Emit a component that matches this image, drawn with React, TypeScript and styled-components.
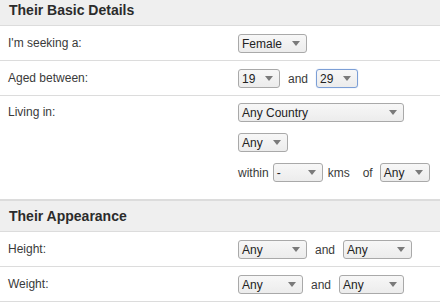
import React from "react";
import styled, { createGlobalStyle } from "styled-components";

const GlobalStyle = createGlobalStyle`
  body {
    margin: 0;
    background: #fff;
    font-family: "Liberation Sans", Arial, sans-serif;
    overflow: hidden;
  }
`;

const Page = styled.div`
  width: 440px;
  margin-top: -6px;
`;

const SectionHeader = styled.h2`
  margin: 0;
  height: 30px;
  line-height: 30px;
  padding: 0 9px;
  font-size: 14px;
  font-weight: bold;
  color: #2b2b2b;
  background: #efefef;
  border-top: 1px solid #dcdcdc;
  border-bottom: 1px solid #dcdcdc;
`;

const Row = styled.div<{ $tall?: boolean }>`
  display: grid;
  grid-template-columns: 238px 1fr;
  align-items: start;
  padding: ${(p) => (p.$tall ? "7px 0 17px" : "8px 0 7px")};
  border-bottom: 1px solid #dcdcdc;
`;

const Label = styled.div`
  padding-left: 8px;
  font-size: 12px;
  line-height: 19px;
  color: #3a3a3a;
`;

const Controls = styled.div`
  display: flex;
  flex-direction: column;
  gap: 11px;
`;

const Line = styled.div<{ $gap?: number }>`
  display: flex;
  align-items: center;
  gap: ${(p) => p.$gap ?? 8}px;
  font-size: 12px;
  color: #3a3a3a;
`;

const Word = styled.span<{ $ml?: number }>`
  margin-left: ${(p) => p.$ml ?? 0}px;
`;

const Dropdown = styled.div<{ $w: number; $focus?: boolean }>`
  box-sizing: border-box;
  width: ${(p) => p.$w}px;
  height: 19px;
  display: flex;
  align-items: center;
  justify-content: space-between;
  padding: 0 6px 0 3px;
  border: 1px solid ${(p) => (p.$focus ? "#7c9fd6" : "#a9a9a9")};
  border-radius: 3px;
  background: linear-gradient(#f7f7f7, #ececec);
  font-size: 12px;
  color: #222;
  box-shadow: ${(p) => (p.$focus ? "0 0 1px #9bb8e6" : "none")};
`;

const Arrow = styled.span`
  width: 0;
  height: 0;
  border-left: 4px solid transparent;
  border-right: 4px solid transparent;
  border-top: 5px solid #7a7a7a;
`;

const Select = ({ value, w, focus }: { value: string; w: number; focus?: boolean }) => (
  <Dropdown $w={w} $focus={focus}>
    <span>{value}</span>
    <Arrow />
  </Dropdown>
);

export default function App() {
  return (
    <Page>
      <GlobalStyle />
      <SectionHeader>Their Basic Details</SectionHeader>
      <Row>
        <Label>I'm seeking a:</Label>
        <Controls>
          <Line>
            <Select value="Female" w={69} />
          </Line>
        </Controls>
      </Row>
      <Row>
        <Label>Aged between:</Label>
        <Controls>
          <Line>
            <Select value="19" w={42} />
            <span>and</span>
            <Select value="29" w={42} focus />
          </Line>
        </Controls>
      </Row>
      <Row $tall>
        <Label>Living in:</Label>
        <Controls>
          <Line>
            <Select value="Any Country" w={166} />
          </Line>
          <Line>
            <Select value="Any" w={50} />
          </Line>
          <Line $gap={4}>
            <span>within</span>
            <Select value="-" w={50} />
            <Word $ml={1}>kms</Word>
            <Word $ml={9}>of</Word>
            <Word $ml={3}>
              <Select value="Any" w={50} />
            </Word>
          </Line>
        </Controls>
      </Row>
      <SectionHeader>Their Appearance</SectionHeader>
      <Row>
        <Label>Height:</Label>
        <Controls>
          <Line>
            <Select value="Any" w={69} />
            <span>and</span>
            <Select value="Any" w={69} />
          </Line>
        </Controls>
      </Row>
      <Row>
        <Label>Weight:</Label>
        <Controls>
          <Line>
            <Select value="Any" w={65} />
            <span>and</span>
            <Select value="Any" w={65} />
          </Line>
        </Controls>
      </Row>
    </Page>
  );
}
